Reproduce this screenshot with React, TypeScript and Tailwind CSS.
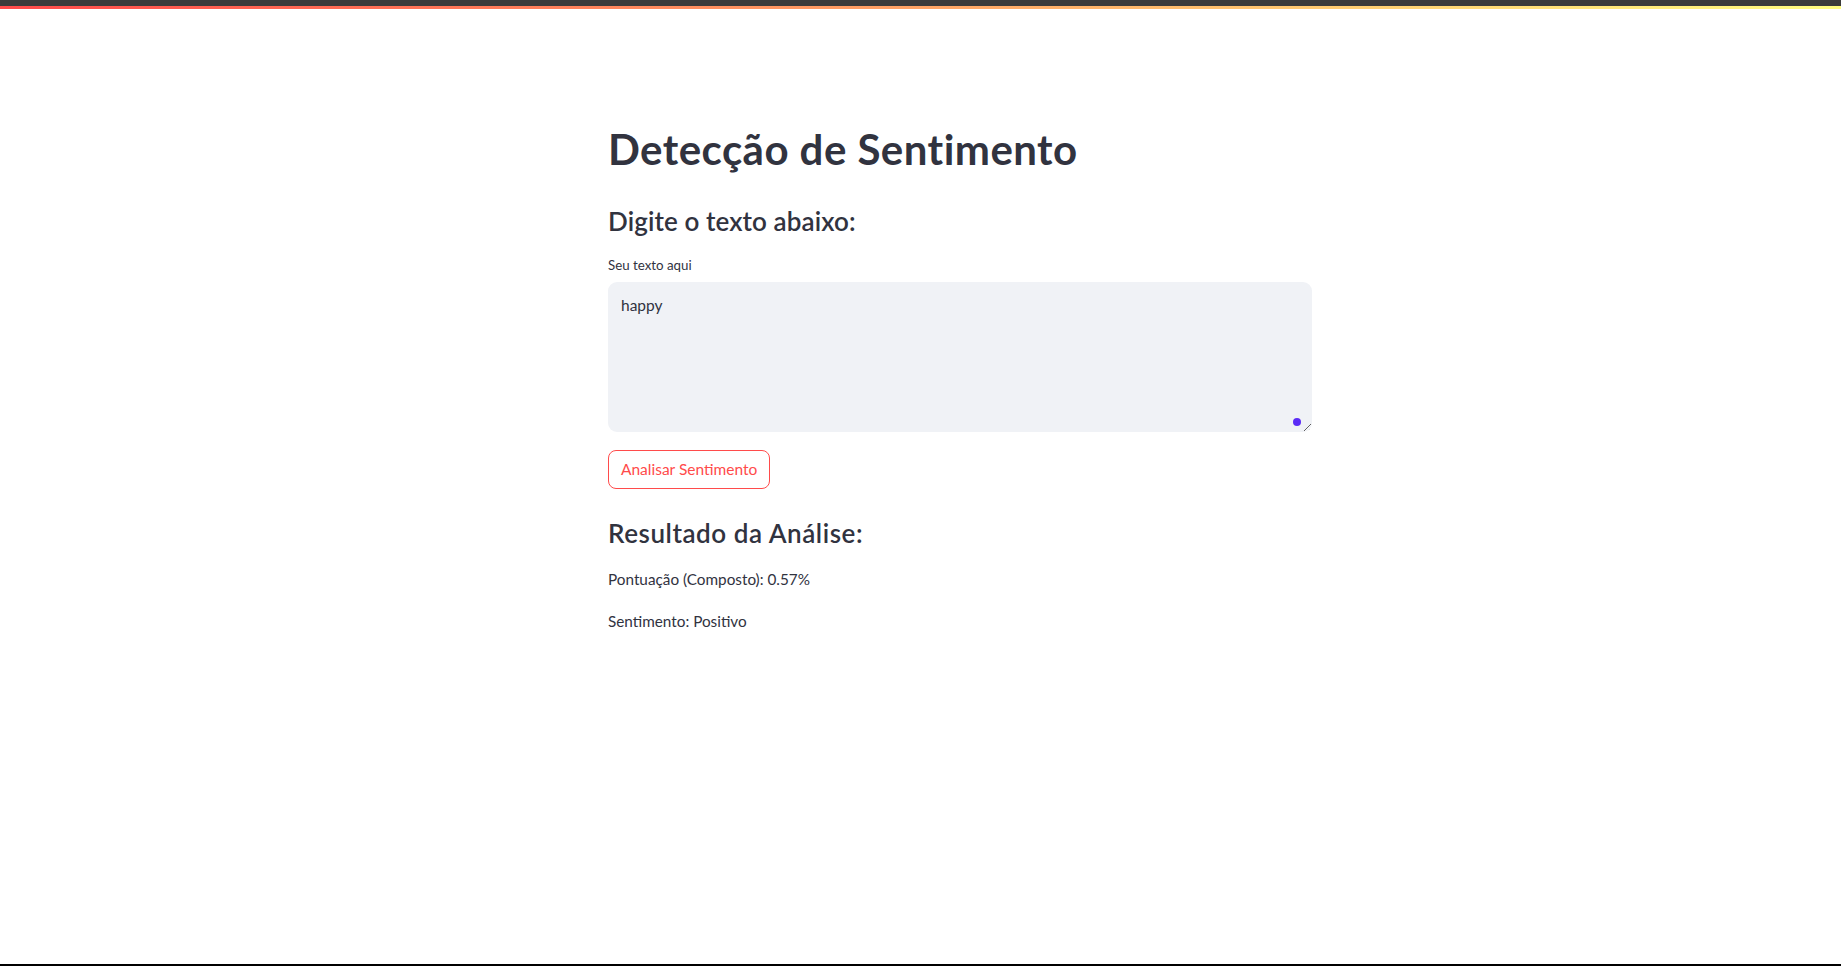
import React from "react";

export default function App() {
  const font = { fontFamily: '"Lato", "Source Sans Pro", "Liberation Sans", sans-serif' };
  return (
    <div className="h-screen w-full flex flex-col bg-white text-[#31333f]" style={font}>
      <div className="h-[6px] bg-[#3b3b3b] shrink-0" />
      <div className="h-[3px] shrink-0 bg-[linear-gradient(90deg,#ff4b4b,#fffd80)]" />
      <main className="flex-1">
        <div className="ml-[608px] w-[704px] flex flex-col">
          <h1 className="mt-[116px] text-[42px] leading-[48px] font-bold tracking-[0.45px]">
            Detecção de Sentimento
          </h1>
          <h2 className="mt-[32px] text-[26px] leading-[32px] font-semibold tracking-[0.1px]">
            Digite o texto abaixo:
          </h2>
          <label className="mt-[20px] text-[13.3px] leading-[16px]">Seu texto aqui</label>
          <div className="relative mt-[9px] h-[150px] rounded-[9px] bg-[#f0f2f6] overflow-hidden">
            <textarea
              defaultValue="happy"
              className="w-full h-full bg-transparent outline-none resize-y px-[13px] pt-[13px] text-[15.5px] leading-[20px] text-[#31333f]"
              style={font}
            />
            <span className="absolute left-[685px] top-[136px] w-[8px] h-[8px] rounded-full bg-[#5b2cf6]" />
          </div>
          <div className="mt-[18px]">
            <button className="h-[39px] px-[12px] rounded-[8px] border border-[#ff4b4b] text-[#ff4b4b] text-[15.5px] bg-white">
              Analisar Sentimento
            </button>
          </div>
          <h2 className="mt-[28px] text-[26px] leading-[32px] font-semibold tracking-[0.55px]">
            Resultado da Análise:
          </h2>
          <p className="mt-[18px] text-[15.3px] leading-[24px]">Pontuação (Composto): 0.57%</p>
          <p className="mt-[18px] text-[15.3px] leading-[24px]">Sentimento: Positivo</p>
        </div>
      </main>
      <div className="h-[2px] bg-black shrink-0" />
    </div>
  );
}
